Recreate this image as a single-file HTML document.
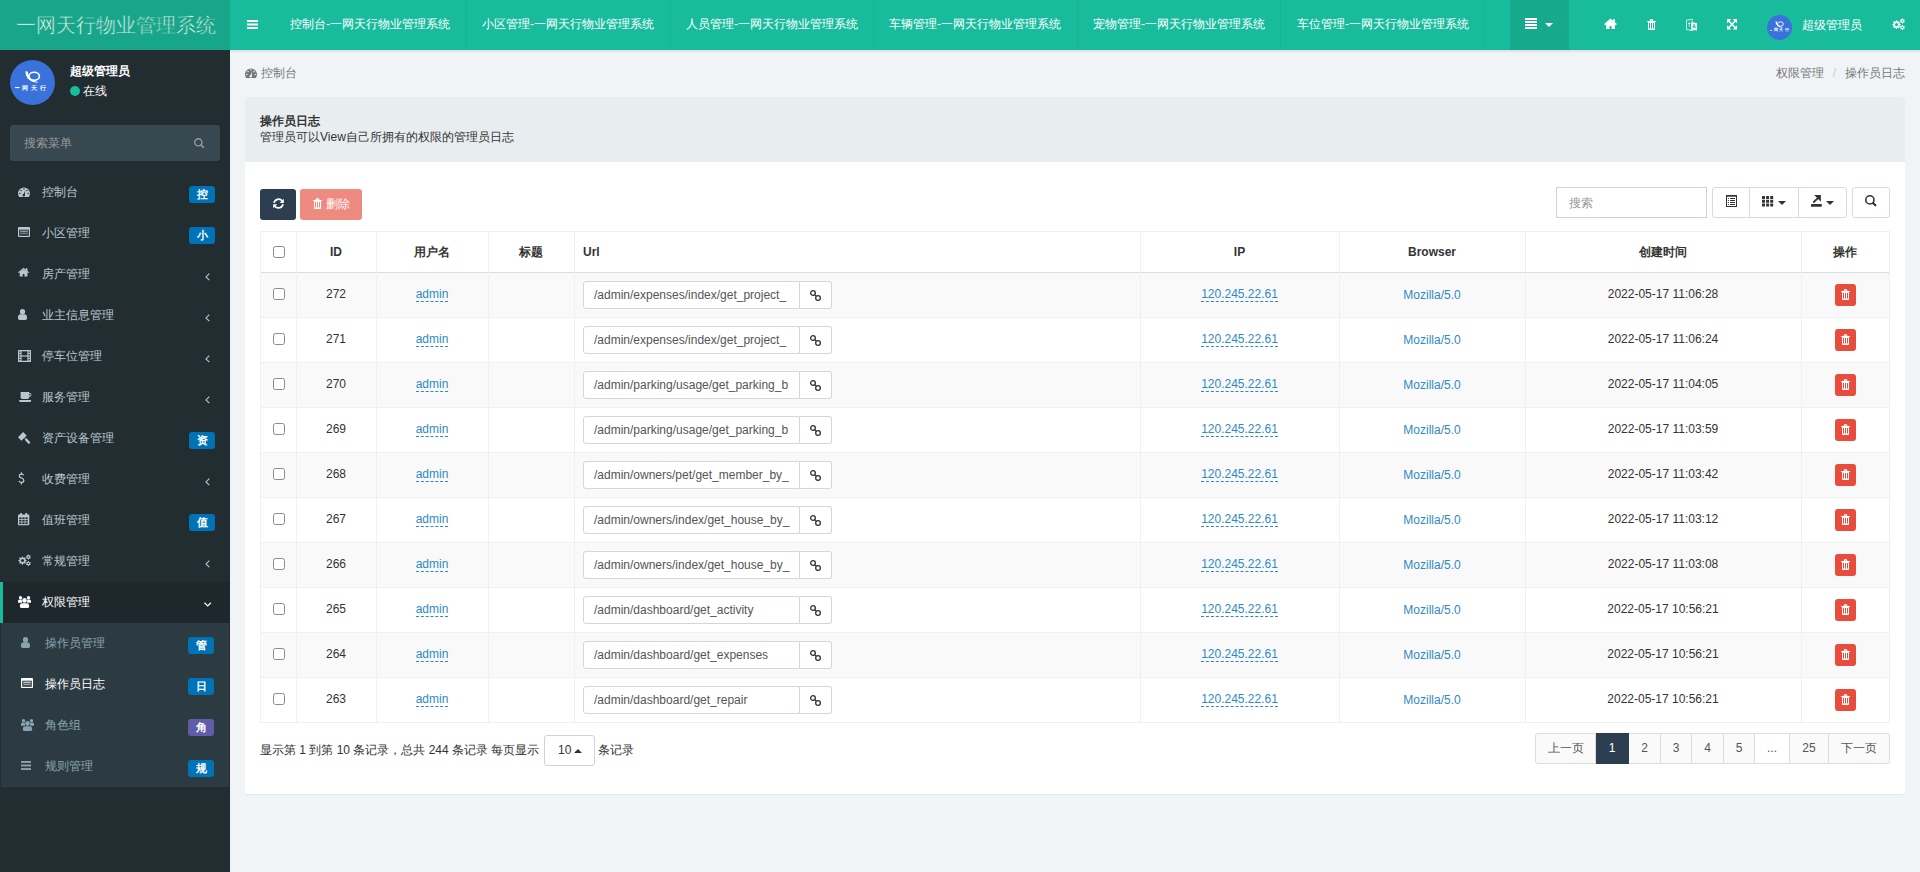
<!DOCTYPE html><html><head><meta charset="utf-8"><title>操作员日志</title><style>
*{box-sizing:border-box;margin:0;padding:0}
html,body{width:1920px;height:872px;overflow:hidden}
body{font-family:"Liberation Sans",sans-serif;font-size:12px;color:#333;background:#f1f4f6;position:relative}
svg{display:block;overflow:visible}
.abs{position:absolute;white-space:nowrap}
.hdr{position:absolute;left:0;top:0;width:1920px;height:50px;background:#18bc9c}
.logo{position:absolute;left:0;top:0;width:230px;height:50px;background:#17a689;color:#fff;font-size:20px;font-weight:300;-webkit-text-stroke:0.6px #17a689;line-height:50px;padding-left:16px;white-space:nowrap}
.tab{position:absolute;top:0;height:50px;line-height:48px;color:#fff;font-size:12px;white-space:nowrap}
.sep{position:absolute;top:0;width:1px;height:49px;background:rgba(0,0,0,0.05)}
.side{position:absolute;left:0;top:50px;width:230px;height:822px;background:#222d32}
.mi{position:absolute;left:0;width:230px;height:41px;color:#b8c7ce;font-size:12px}
.mi .tx{position:absolute;left:41px;top:0;line-height:41px}
.bd{position:absolute;width:26px;height:17px;border-radius:3px;background:#0073b7;color:#fff;font-weight:bold;font-size:11px;line-height:17px;text-align:center}
.content{position:absolute;left:230px;top:50px;width:1690px;height:822px;background:#f1f4f6}
.shadow{position:absolute;left:230px;top:50px;width:1690px;height:3px;background:linear-gradient(rgba(0,0,0,0.10),rgba(0,0,0,0))}
.panel{position:absolute;left:245px;top:97px;width:1660px;height:697px;background:#fff;border-radius:3px;box-shadow:0 1px 1px rgba(0,0,0,0.05)}
.ph{position:absolute;left:245px;top:97px;width:1660px;height:65px;background:#e8edf0;border-radius:3px 3px 0 0}
.hline{position:absolute;height:1px;background:#f0f0f0}
.vline{position:absolute;width:1px;background:#f0f0f0}
.cell{position:absolute;text-align:center;white-space:nowrap}
.lnk{color:#2f8ac4;border-bottom:1px dashed #2f8ac4}
.lnk2{color:#2f8ac4}
.inp{position:absolute;height:28px;border:1px solid #d2d6de;border-radius:3px 0 0 3px;background:#fff;color:#555;font-size:12px;line-height:26px;padding-left:10px;white-space:nowrap;overflow:hidden}
.addon{position:absolute;height:28px;border:1px solid #d2d6de;border-left:0;border-radius:0 3px 3px 0;background:#fff}
.cb{position:absolute;width:12px;height:12px;border:1px solid #8a8a8a;border-radius:2.5px;background:#fff}
.dbtn{position:absolute;width:21px;height:22px;border-radius:3px;background:#e74c3c}
.pg{position:absolute;top:733px;height:31px;border:1px solid #ddd;border-left:0;background:#fafafa;color:#555;text-align:center;line-height:29px;font-size:12px}
</style></head><body>
<div class="hdr"></div>
<div class="logo">一网天行物业管理系统</div>
<svg style="position:absolute;left:247px;top:20px" width="11" height="9" viewBox="0 0 11 9" ><rect x="0" y="0.00" width="11" height="2" fill="#fff"/><rect x="0" y="3.50" width="11" height="2" fill="#fff"/><rect x="0" y="7.00" width="11" height="2" fill="#fff"/></svg>
<div class="tab" style="left:290px">控制台-一网天行物业管理系统</div>
<div class="tab" style="left:482px">小区管理-一网天行物业管理系统</div>
<div class="tab" style="left:686px">人员管理-一网天行物业管理系统</div>
<div class="tab" style="left:889px">车辆管理-一网天行物业管理系统</div>
<div class="tab" style="left:1093px">宠物管理-一网天行物业管理系统</div>
<div class="tab" style="left:1297px">车位管理-一网天行物业管理系统</div>
<div class="sep" style="left:466px"></div>
<div class="sep" style="left:670px"></div>
<div class="sep" style="left:873px"></div>
<div class="sep" style="left:1077px"></div>
<div class="sep" style="left:1280px"></div>
<div class="sep" style="left:1484px"></div>
<div class="abs" style="left:1510px;top:0;width:59px;height:50px;background:#16a98c"></div>
<svg style="position:absolute;left:1525px;top:18px" width="12" height="11" viewBox="0 0 12 11" ><rect x="0" y="0.00" width="12" height="2" fill="#fff"/><rect x="0" y="3.00" width="12" height="2" fill="#fff"/><rect x="0" y="6.00" width="12" height="2" fill="#fff"/><rect x="0" y="9.00" width="12" height="2" fill="#fff"/></svg>
<svg style="position:absolute;left:1545px;top:23px" width="8" height="4" viewBox="0 0 8 4" ><path d="M0 0H8L4.0 4Z" fill="#fff"/></svg>
<svg style="position:absolute;left:1604px;top:19px" width="14" height="12" viewBox="0 0 14 12" ><g transform="scale(1.0)"><path d="M0.6 5.6L6.5 0.6L12.4 5.6" fill="none" stroke="#fff" stroke-width="1.5"/><path d="M2 5L6.5 1.6L11 5V10H7.5V7H5.5V10H2Z" fill="#fff"/><rect x="9" y="0.3" width="2" height="3.6" fill="#fff"/></g></svg>
<svg style="position:absolute;left:1647px;top:19px" width="9" height="11" viewBox="0 0 9 11" ><path d="M2.5 2Q2.6 0 4.5 0Q6.4 0 6.5 2Z" fill="#fff"/><path d="M3.5 2Q3.6 1 4.5 1Q5.4 1 5.5 2Z" fill="#18bc9c" fill-opacity="0.5"/><path d="M-0.3 2H9.3L8.6 3H0.4Z" fill="#fff"/><path d="M1 3H8V10.2Q8 11 7.2 11H1.8Q1 11 1 10.2Z" fill="#fff"/><rect x="2" y="4" width="1" height="5.5" fill="#18bc9c"/><rect x="4" y="4" width="1" height="5.5" fill="#18bc9c"/><rect x="6" y="4" width="1" height="5.5" fill="#18bc9c"/></svg>
<svg style="position:absolute;left:1686px;top:19px" width="11" height="12" viewBox="0 0 11 12" ><path d="M0.5 1.2L6.2 0.2V11.5L0.5 10.4Z" fill="none" stroke="#fff" stroke-width="0.9" stroke-opacity="0.8"/><path d="M2 4.5H4.5M3.2 3.3V8" stroke="#fff" stroke-width="0.8" stroke-opacity="0.8"/><path d="M5.3 3.2L11 3.9V11.6L5.3 10.8Z" fill="#fff"/><path d="M7 9.2L8.2 5.3L9.5 9.2M7.5 8H9" fill="none" stroke="#18bc9c" stroke-width="0.9"/><path d="M3.5 11.5H7.5" stroke="#fff" stroke-width="0.8" stroke-opacity="0.6"/></svg>
<svg style="position:absolute;left:1727px;top:19px" width="10" height="11" viewBox="0 0 10 11" ><path d="M0 0H4.2L0 4.2Z" fill="#fff"/><path d="M10 0H5.8L10 4.2Z" fill="#fff"/><path d="M0 10.5H4.2L0 6.3Z" fill="#fff"/><path d="M10 10.5H5.8L10 6.3Z" fill="#fff"/><path d="M1.2 1.2L8.8 9.3M8.8 1.2L1.2 9.3" stroke="#fff" stroke-width="1.5"/></svg>
<svg style="position:absolute;left:1767px;top:15px" width="25" height="25" viewBox="0 0 25 25" ><circle cx="12.5" cy="12.5" r="12.5" fill="#3a72dc"/><g transform="scale(0.5555555555555556)"><ellipse cx="24.2" cy="16.2" rx="5.2" ry="4" fill="none" stroke="#fff" stroke-width="1.6"/><path d="M15.3 11.3Q15.8 19 22 21.6Q25.5 22.9 28.5 22.2Q23.5 21.2 20.3 18Q17.6 15.2 17.8 11.6Z" fill="#fff"/><rect x="5" y="27" width="4.5" height="1.1" fill="#fff"/><text x="12" y="29.5" font-size="6.4" font-weight="bold" font-family="Liberation Sans" fill="#fff" fill-opacity="0.95" letter-spacing="3">网天行</text></g></svg>
<div class="abs" style="left:1802px;top:0;line-height:50px;color:#fff;font-size:12px">超级管理员</div>
<svg style="position:absolute;left:1892px;top:18px" width="14" height="13" viewBox="0 0 14 13" ><path d="M4.08 2.32L4.92 2.32L5.42 3.56L6.00 3.79L7.23 3.28L7.82 3.87L7.31 5.10L7.54 5.68L8.78 6.18L8.78 7.02L7.54 7.52L7.31 8.10L7.82 9.33L7.23 9.92L6.00 9.41L5.42 9.64L4.92 10.88L4.08 10.88L3.58 9.64L3.00 9.41L1.77 9.92L1.18 9.33L1.69 8.10L1.46 7.52L0.22 7.02L0.22 6.18L1.46 5.68L1.69 5.10L1.18 3.87L1.77 3.28L3.00 3.79L3.58 3.56Z" fill="#fff"/><circle cx="4.5" cy="6.6" r="1.55" fill="#18bc9c"/><path d="M10.07 0.52L10.73 0.52L11.11 1.29L11.53 1.53L12.38 1.48L12.71 2.04L12.23 2.76L12.23 3.24L12.71 3.96L12.38 4.52L11.53 4.47L11.11 4.71L10.73 5.48L10.07 5.48L9.69 4.71L9.27 4.47L8.42 4.52L8.09 3.96L8.57 3.24L8.57 2.76L8.09 2.04L8.42 1.48L9.27 1.53L9.69 1.29Z" fill="#fff"/><circle cx="10.4" cy="3.0" r="0.75" fill="#18bc9c"/><path d="M10.07 7.12L10.73 7.12L11.11 7.89L11.53 8.13L12.38 8.08L12.71 8.64L12.23 9.36L12.23 9.84L12.71 10.56L12.38 11.12L11.53 11.07L11.11 11.31L10.73 12.08L10.07 12.08L9.69 11.31L9.27 11.07L8.42 11.12L8.09 10.56L8.57 9.84L8.57 9.36L8.09 8.64L8.42 8.08L9.27 8.13L9.69 7.89Z" fill="#fff"/><circle cx="10.4" cy="9.6" r="0.75" fill="#18bc9c"/></svg>
<div class="side"></div>
<svg style="position:absolute;left:10px;top:60px" width="45" height="45" viewBox="0 0 45 45" ><circle cx="22.5" cy="22.5" r="22.5" fill="#3a72dc"/><g transform="scale(1.0)"><ellipse cx="24.2" cy="16.2" rx="5.2" ry="4" fill="none" stroke="#fff" stroke-width="1.6"/><path d="M15.3 11.3Q15.8 19 22 21.6Q25.5 22.9 28.5 22.2Q23.5 21.2 20.3 18Q17.6 15.2 17.8 11.6Z" fill="#fff"/><rect x="5" y="27" width="4.5" height="1.1" fill="#fff"/><text x="12" y="29.5" font-size="6.4" font-weight="bold" font-family="Liberation Sans" fill="#fff" fill-opacity="0.95" letter-spacing="3">网天行</text></g></svg>
<div class="abs" style="left:70px;top:63px;color:#fff;font-weight:bold;font-size:12px;line-height:16px">超级管理员</div>
<div class="abs" style="left:70px;top:86px;width:10px;height:10px;border-radius:50%;background:#18bc9c"></div>
<div class="abs" style="left:83px;top:83px;color:#fff;font-size:12px;line-height:16px">在线</div>
<div class="abs" style="left:10px;top:125px;width:210px;height:36px;background:#374850;border-radius:3px"></div>
<div class="abs" style="left:24px;top:125px;line-height:37px;color:#999;font-size:12px">搜索菜单</div>
<svg style="position:absolute;left:194px;top:138px" width="13" height="13" viewBox="0 0 13 13" ><circle cx="4.30" cy="4.30" r="3.6" fill="none" stroke="#999" stroke-width="1.4"/><path d="M7.19 7.19L9.16 9.16" stroke="#999" stroke-width="1.8" stroke-linecap="round"/></svg>
<svg style="position:absolute;left:18px;top:187px" width="12" height="10" viewBox="0 0 12 10" ><path d="M1.13 10A6 6 0 1 1 10.87 10Z" fill="#b8c7ce"/><circle cx="6" cy="2.1" r="0.75" fill="#222d32"/><circle cx="3" cy="3.4" r="0.75" fill="#222d32"/><circle cx="9" cy="3.4" r="0.75" fill="#222d32"/><circle cx="1.9" cy="6.5" r="0.75" fill="#222d32"/><circle cx="10.1" cy="6.5" r="0.75" fill="#222d32"/><circle cx="5.8" cy="8.2" r="1.2" fill="#222d32"/><path d="M5 8.2L7.3 3.6L6.6 8.4Z" fill="#222d32"/></svg>
<div class="abs" style="left:42px;top:172px;line-height:41px;color:#b8c7ce;font-size:12px">控制台</div>
<div class="bd" style="left:189px;top:186px">控</div>
<svg style="position:absolute;left:18px;top:227px" width="12" height="10" viewBox="0 0 12 10" ><rect x="0" y="0" width="12" height="10" rx="0.8" fill="#b8c7ce"/><rect x="1.2" y="2.7" width="9.6" height="6.1" fill="#222d32"/><rect x="2.2" y="3.7" width="7.6" height="1" fill="#b8c7ce"/><rect x="2.2" y="5.6" width="7.6" height="1.6" fill="#b8c7ce" fill-opacity="0.55"/></svg>
<div class="abs" style="left:42px;top:213px;line-height:41px;color:#b8c7ce;font-size:12px">小区管理</div>
<div class="bd" style="left:189px;top:227px">小</div>
<svg style="position:absolute;left:18px;top:268px" width="12" height="10" viewBox="0 0 12 10" ><g transform="scale(0.86)"><path d="M0.6 5.6L6.5 0.6L12.4 5.6" fill="none" stroke="#b8c7ce" stroke-width="1.5"/><path d="M2 5L6.5 1.6L11 5V10H7.5V7H5.5V10H2Z" fill="#b8c7ce"/><rect x="9" y="0.3" width="2" height="3.6" fill="#b8c7ce"/></g></svg>
<div class="abs" style="left:42px;top:254px;line-height:41px;color:#b8c7ce;font-size:12px">房产管理</div>
<svg style="position:absolute;left:205px;top:273px" width="5" height="8" viewBox="0 0 5 8" ><path d="M4.3 0.6L1 3.9L4.3 7.2" fill="none" stroke="#b8c7ce" stroke-width="1.1"/></svg>
<svg style="position:absolute;left:18px;top:309px" width="9" height="11" viewBox="0 0 9 11" ><circle cx="4.5" cy="2.7" r="2.6" fill="#b8c7ce"/><path d="M0 9.3V8.3Q0 5.3 2.8 5.3H6.2Q9 5.3 9 8.3V9.3Q9 11 7.3 11H1.7Q0 11 0 9.3Z" fill="#b8c7ce"/></svg>
<div class="abs" style="left:42px;top:295px;line-height:41px;color:#b8c7ce;font-size:12px">业主信息管理</div>
<svg style="position:absolute;left:205px;top:314px" width="5" height="8" viewBox="0 0 5 8" ><path d="M4.3 0.6L1 3.9L4.3 7.2" fill="none" stroke="#b8c7ce" stroke-width="1.1"/></svg>
<svg style="position:absolute;left:18px;top:350px" width="13" height="12" viewBox="0 0 13 12" ><rect x="0" y="0" width="13" height="12" rx="0.6" fill="#b8c7ce"/><rect x="3.6" y="1.3" width="5.8" height="4.1" fill="#222d32"/><rect x="3.6" y="6.6" width="5.8" height="4.1" fill="#222d32"/><rect x="1.1" y="1.50" width="1.4" height="1.3" fill="#222d32"/><rect x="10.5" y="1.50" width="1.4" height="1.3" fill="#222d32"/><rect x="1.1" y="4.00" width="1.4" height="1.3" fill="#222d32"/><rect x="10.5" y="4.00" width="1.4" height="1.3" fill="#222d32"/><rect x="1.1" y="6.50" width="1.4" height="1.3" fill="#222d32"/><rect x="10.5" y="6.50" width="1.4" height="1.3" fill="#222d32"/><rect x="1.1" y="9.00" width="1.4" height="1.3" fill="#222d32"/><rect x="10.5" y="9.00" width="1.4" height="1.3" fill="#222d32"/></svg>
<div class="abs" style="left:42px;top:336px;line-height:41px;color:#b8c7ce;font-size:12px">停车位管理</div>
<svg style="position:absolute;left:205px;top:355px" width="5" height="8" viewBox="0 0 5 8" ><path d="M4.3 0.6L1 3.9L4.3 7.2" fill="none" stroke="#b8c7ce" stroke-width="1.1"/></svg>
<svg style="position:absolute;left:19px;top:392px" width="13" height="10" viewBox="0 0 13 10" ><path d="M1.6 0H10.2V5.3Q10.2 7 8.5 7H3.3Q1.6 7 1.6 5.3Z" fill="#b8c7ce"/><circle cx="10.5" cy="2.8" r="1.9" fill="#b8c7ce"/><circle cx="10.7" cy="2.8" r="0.8" fill="#222d32"/><path d="M0 8H12.3L11.6 10H0.7Z" fill="#b8c7ce"/></svg>
<div class="abs" style="left:42px;top:377px;line-height:41px;color:#b8c7ce;font-size:12px">服务管理</div>
<svg style="position:absolute;left:205px;top:396px" width="5" height="8" viewBox="0 0 5 8" ><path d="M4.3 0.6L1 3.9L4.3 7.2" fill="none" stroke="#b8c7ce" stroke-width="1.1"/></svg>
<svg style="position:absolute;left:18px;top:432px" width="12" height="12" viewBox="0 0 12 12" ><path d="M0 5.2L5.1 0L8.7 3.5L3.4 8.8Z" fill="#b8c7ce"/><path d="M6.2 5.6L7.8 7.2" stroke="#b8c7ce" stroke-width="1"/><path d="M8.2 7.6L11 10.6" stroke="#b8c7ce" stroke-width="2.3" stroke-linecap="round"/></svg>
<div class="abs" style="left:42px;top:418px;line-height:41px;color:#b8c7ce;font-size:12px">资产设备管理</div>
<div class="bd" style="left:189px;top:432px">资</div>
<svg style="position:absolute;left:18px;top:472px" width="7" height="13" viewBox="0 0 7 13" ><path d="M5.6 3.2Q5 2.1 3.5 2.1Q1.3 2.1 1.3 3.9Q1.3 5.4 3.4 5.9Q5.8 6.5 5.8 8.4Q5.8 10.4 3.4 10.4Q1.6 10.4 0.9 9" fill="none" stroke="#b8c7ce" stroke-width="1.3"/><path d="M3.4 0.3V2.1M3.4 10.4V12.6" stroke="#b8c7ce" stroke-width="1.2"/></svg>
<div class="abs" style="left:42px;top:459px;line-height:41px;color:#b8c7ce;font-size:12px">收费管理</div>
<svg style="position:absolute;left:205px;top:478px" width="5" height="8" viewBox="0 0 5 8" ><path d="M4.3 0.6L1 3.9L4.3 7.2" fill="none" stroke="#b8c7ce" stroke-width="1.1"/></svg>
<svg style="position:absolute;left:18px;top:513px" width="12" height="13" viewBox="0 0 12 13" ><rect x="0" y="1.5" width="11.3" height="10.7" rx="0.6" fill="#b8c7ce"/><rect x="1.20" y="4.40" width="2.3" height="1.7" fill="#222d32"/><rect x="1.20" y="6.90" width="2.3" height="1.7" fill="#222d32"/><rect x="1.20" y="9.40" width="2.3" height="1.7" fill="#222d32"/><rect x="4.30" y="4.40" width="2.3" height="1.7" fill="#222d32"/><rect x="4.30" y="6.90" width="2.3" height="1.7" fill="#222d32"/><rect x="4.30" y="9.40" width="2.3" height="1.7" fill="#222d32"/><rect x="7.40" y="4.40" width="2.3" height="1.7" fill="#222d32"/><rect x="7.40" y="6.90" width="2.3" height="1.7" fill="#222d32"/><rect x="7.40" y="9.40" width="2.3" height="1.7" fill="#222d32"/><rect x="2.1" y="0" width="1.9" height="3" rx="0.6" fill="#b8c7ce"/><rect x="7.3" y="0" width="1.9" height="3" rx="0.6" fill="#b8c7ce"/></svg>
<div class="abs" style="left:42px;top:500px;line-height:41px;color:#b8c7ce;font-size:12px">值班管理</div>
<div class="bd" style="left:189px;top:514px">值</div>
<svg style="position:absolute;left:18px;top:554px" width="14" height="13" viewBox="0 0 14 13" ><path d="M4.09 2.42L4.91 2.42L5.40 3.63L5.97 3.86L7.16 3.35L7.75 3.94L7.24 5.13L7.47 5.70L8.68 6.19L8.68 7.01L7.47 7.50L7.24 8.07L7.75 9.26L7.16 9.85L5.97 9.34L5.40 9.57L4.91 10.78L4.09 10.78L3.60 9.57L3.03 9.34L1.84 9.85L1.25 9.26L1.76 8.07L1.53 7.50L0.32 7.01L0.32 6.19L1.53 5.70L1.76 5.13L1.25 3.94L1.84 3.35L3.03 3.86L3.60 3.63Z" fill="#b8c7ce"/><circle cx="4.5" cy="6.6" r="1.51" fill="#222d32"/><path d="M10.07 0.52L10.73 0.52L11.11 1.29L11.53 1.53L12.38 1.48L12.71 2.04L12.23 2.76L12.23 3.24L12.71 3.96L12.38 4.52L11.53 4.47L11.11 4.71L10.73 5.48L10.07 5.48L9.69 4.71L9.27 4.47L8.42 4.52L8.09 3.96L8.57 3.24L8.57 2.76L8.09 2.04L8.42 1.48L9.27 1.53L9.69 1.29Z" fill="#b8c7ce"/><circle cx="10.4" cy="3.0" r="0.75" fill="#222d32"/><path d="M10.07 7.12L10.73 7.12L11.11 7.89L11.53 8.13L12.38 8.08L12.71 8.64L12.23 9.36L12.23 9.84L12.71 10.56L12.38 11.12L11.53 11.07L11.11 11.31L10.73 12.08L10.07 12.08L9.69 11.31L9.27 11.07L8.42 11.12L8.09 10.56L8.57 9.84L8.57 9.36L8.09 8.64L8.42 8.08L9.27 8.13L9.69 7.89Z" fill="#b8c7ce"/><circle cx="10.4" cy="9.6" r="0.75" fill="#222d32"/></svg>
<div class="abs" style="left:42px;top:541px;line-height:41px;color:#b8c7ce;font-size:12px">常规管理</div>
<svg style="position:absolute;left:205px;top:560px" width="5" height="8" viewBox="0 0 5 8" ><path d="M4.3 0.6L1 3.9L4.3 7.2" fill="none" stroke="#b8c7ce" stroke-width="1.1"/></svg>
<div class="abs" style="left:0;top:582px;width:230px;height:41px;background:#1e282c"></div>
<div class="abs" style="left:0;top:582px;width:3px;height:41px;background:#18bc9c"></div>
<svg style="position:absolute;left:18px;top:596px" width="13" height="12" viewBox="0 0 13 12" ><circle cx="2.5" cy="1.7" r="1.65" fill="#fff"/><circle cx="10.5" cy="1.7" r="1.65" fill="#fff"/><path d="M0 6.7V5Q0 3.4 1.6 3.4H3.8L4 6.7Z" fill="#fff"/><path d="M13 6.7V5Q13 3.4 11.4 3.4H9.2L9 6.7Z" fill="#fff"/><circle cx="6.5" cy="4.4" r="2.3" fill="#fff"/><path d="M1.9 10.4V9.4Q1.9 7.2 4.1 7.2H8.9Q11.1 7.2 11.1 9.4V10.4Q11.1 12 9.5 12H3.5Q1.9 12 1.9 10.4Z" fill="#fff"/></svg>
<div class="abs" style="left:42px;top:582px;line-height:41px;color:#fff;font-size:12px">权限管理</div>
<svg style="position:absolute;left:204px;top:602px" width="8" height="5" viewBox="0 0 8 5" ><path d="M0.5 0.8L3.7 3.9L6.9 0.8" fill="none" stroke="#fff" stroke-width="1.2"/></svg>
<div class="abs" style="left:1px;top:623px;width:228px;height:164px;background:#2c3b41"></div>
<svg style="position:absolute;left:21px;top:637px" width="9" height="11" viewBox="0 0 9 11" ><circle cx="4.5" cy="2.7" r="2.6" fill="#8aa4af"/><path d="M0 9.3V8.3Q0 5.3 2.8 5.3H6.2Q9 5.3 9 8.3V9.3Q9 11 7.3 11H1.7Q0 11 0 9.3Z" fill="#8aa4af"/></svg>
<div class="abs" style="left:45px;top:623px;line-height:41px;color:#8aa4af;font-size:12px">操作员管理</div>
<div class="bd" style="left:188px;top:637px;background:#0073b7">管</div>
<svg style="position:absolute;left:21px;top:678px" width="12" height="10" viewBox="0 0 12 10" ><rect x="0" y="0" width="12" height="10" rx="0.8" fill="#fff"/><rect x="1.2" y="2.7" width="9.6" height="6.1" fill="#2c3b41"/><rect x="2.2" y="3.7" width="7.6" height="1" fill="#fff"/><rect x="2.2" y="5.6" width="7.6" height="1.6" fill="#fff" fill-opacity="0.55"/></svg>
<div class="abs" style="left:45px;top:664px;line-height:41px;color:#fff;font-size:12px">操作员日志</div>
<div class="bd" style="left:188px;top:678px;background:#0073b7">日</div>
<svg style="position:absolute;left:21px;top:719px" width="13" height="12" viewBox="0 0 13 12" ><circle cx="2.5" cy="1.7" r="1.65" fill="#8aa4af"/><circle cx="10.5" cy="1.7" r="1.65" fill="#8aa4af"/><path d="M0 6.7V5Q0 3.4 1.6 3.4H3.8L4 6.7Z" fill="#8aa4af"/><path d="M13 6.7V5Q13 3.4 11.4 3.4H9.2L9 6.7Z" fill="#8aa4af"/><circle cx="6.5" cy="4.4" r="2.3" fill="#8aa4af"/><path d="M1.9 10.4V9.4Q1.9 7.2 4.1 7.2H8.9Q11.1 7.2 11.1 9.4V10.4Q11.1 12 9.5 12H3.5Q1.9 12 1.9 10.4Z" fill="#8aa4af"/></svg>
<div class="abs" style="left:45px;top:705px;line-height:41px;color:#8aa4af;font-size:12px">角色组</div>
<div class="bd" style="left:188px;top:719px;background:#605ca8">角</div>
<svg style="position:absolute;left:21px;top:761px" width="10" height="9" viewBox="0 0 10 9" ><rect x="0" y="0.00" width="10" height="1.9" fill="#8aa4af"/><rect x="0" y="3.55" width="10" height="1.9" fill="#8aa4af"/><rect x="0" y="7.10" width="10" height="1.9" fill="#8aa4af"/></svg>
<div class="abs" style="left:45px;top:746px;line-height:41px;color:#8aa4af;font-size:12px">规则管理</div>
<div class="bd" style="left:188px;top:760px;background:#0073b7">规</div>
<div class="shadow"></div>
<svg style="position:absolute;left:245px;top:68px" width="12" height="10" viewBox="0 0 12 10" ><path d="M1.13 10A6 6 0 1 1 10.87 10Z" fill="#777"/><circle cx="6" cy="2.1" r="0.75" fill="#f1f4f6"/><circle cx="3" cy="3.4" r="0.75" fill="#f1f4f6"/><circle cx="9" cy="3.4" r="0.75" fill="#f1f4f6"/><circle cx="1.9" cy="6.5" r="0.75" fill="#f1f4f6"/><circle cx="10.1" cy="6.5" r="0.75" fill="#f1f4f6"/><circle cx="5.8" cy="8.2" r="1.2" fill="#f1f4f6"/><path d="M5 8.2L7.3 3.6L6.6 8.4Z" fill="#f1f4f6"/></svg>
<div class="abs" style="left:261px;top:65px;line-height:16px;color:#777;font-size:12px">控制台</div>
<div class="abs" style="right:15px;top:65px;line-height:16px;color:#777;font-size:12px">权限管理<span style="color:#ccc;padding:0 9px">/</span>操作员日志</div>
<div class="panel"></div>
<div class="ph"></div>
<div class="abs" style="left:260px;top:113px;line-height:16px;font-weight:bold;color:#333;font-size:12px">操作员日志</div>
<div class="abs" style="left:260px;top:129px;line-height:16px;color:#333;font-size:12px">管理员可以View自己所拥有的权限的管理员日志</div>
<div class="abs" style="left:260px;top:189px;width:36px;height:31px;background:#2c3e50;border-radius:3px"></div>
<svg style="position:absolute;left:273px;top:198px" width="11" height="11" viewBox="0 0 11 11" ><path d="M1 4.9A4.7 4.7 0 0 1 9.3 3" fill="none" stroke="#fff" stroke-width="1.7"/><path d="M10.8 0.8V4.9H6.7Z" fill="#fff"/><path d="M10 6.2A4.7 4.7 0 0 1 1.7 8.1" fill="none" stroke="#fff" stroke-width="1.7"/><path d="M0.2 10.3V6.2H4.3Z" fill="#fff"/></svg>
<div class="abs" style="left:300px;top:189px;width:62px;height:31px;background:#ef8a80;border-radius:3px"></div>
<svg style="position:absolute;left:313px;top:198px" width="9" height="11" viewBox="0 0 9 11" ><path d="M2.5 2Q2.6 0 4.5 0Q6.4 0 6.5 2Z" fill="#fff"/><path d="M3.5 2Q3.6 1 4.5 1Q5.4 1 5.5 2Z" fill="#ef8a80" fill-opacity="0.5"/><path d="M-0.3 2H9.3L8.6 3H0.4Z" fill="#fff"/><path d="M1 3H8V10.2Q8 11 7.2 11H1.8Q1 11 1 10.2Z" fill="#fff"/><rect x="2" y="4" width="1" height="5.5" fill="#ef8a80"/><rect x="4" y="4" width="1" height="5.5" fill="#ef8a80"/><rect x="6" y="4" width="1" height="5.5" fill="#ef8a80"/></svg>
<div class="abs" style="left:326px;top:189px;line-height:31px;color:#fff;font-size:12px">删除</div>
<div class="abs" style="left:1556px;top:187px;width:151px;height:31px;border:1px solid #ccd3da;border-radius:0;background:#fff"></div>
<div class="abs" style="left:1569px;top:188px;line-height:31px;color:#999;font-size:12px">搜索</div>
<div class="abs" style="left:1712px;top:187px;width:135px;height:31px;border:1px solid #d5dbe0;border-radius:3px;background:#fff"></div>
<div class="abs" style="left:1749px;top:187px;width:1px;height:31px;background:#d5dbe0"></div>
<div class="abs" style="left:1798px;top:187px;width:1px;height:31px;background:#d5dbe0"></div>
<svg style="position:absolute;left:1726px;top:195px" width="11" height="12" viewBox="0 0 11 12" ><rect x="0.5" y="0.5" width="10" height="11" fill="none" stroke="#333" stroke-width="1"/><rect x="0" y="0" width="11" height="1.7" fill="#333"/><rect x="1.9" y="3" width="1" height="1" fill="#333"/><rect x="4" y="3" width="5" height="1" fill="#333"/><rect x="1.9" y="5" width="1" height="1" fill="#333"/><rect x="4" y="5" width="5" height="1" fill="#333"/><rect x="1.9" y="7" width="1" height="1" fill="#333"/><rect x="4" y="7" width="5" height="1" fill="#333"/><rect x="1.9" y="9" width="1" height="1" fill="#333"/><rect x="4" y="9" width="5" height="1" fill="#333"/></svg>
<svg style="position:absolute;left:1762px;top:196px" width="12" height="11" viewBox="0 0 12 11" ><rect x="0.00" y="0.00" width="3" height="3" rx="0.3" fill="#333"/><rect x="0.00" y="3.70" width="3" height="3" rx="0.3" fill="#333"/><rect x="0.00" y="7.40" width="3" height="3" rx="0.3" fill="#333"/><rect x="4.10" y="0.00" width="3" height="3" rx="0.3" fill="#333"/><rect x="4.10" y="3.70" width="3" height="3" rx="0.3" fill="#333"/><rect x="4.10" y="7.40" width="3" height="3" rx="0.3" fill="#333"/><rect x="8.20" y="0.00" width="3" height="3" rx="0.3" fill="#333"/><rect x="8.20" y="3.70" width="3" height="3" rx="0.3" fill="#333"/><rect x="8.20" y="7.40" width="3" height="3" rx="0.3" fill="#333"/></svg>
<svg style="position:absolute;left:1778px;top:201px" width="8" height="4" viewBox="0 0 8 4" ><path d="M0 0H8L4.0 4Z" fill="#333"/></svg>
<svg style="position:absolute;left:1810px;top:195px" width="12" height="12" viewBox="0 0 12 12" ><rect x="1" y="9.1" width="10.8" height="2.7" rx="0.6" fill="#333"/><path d="M4.1 0.1H10.9V6.8Z" fill="#333"/><path d="M8.4 2.6L3.8 7" stroke="#333" stroke-width="1.8" stroke-linecap="round"/></svg>
<svg style="position:absolute;left:1826px;top:201px" width="8" height="4" viewBox="0 0 8 4" ><path d="M0 0H8L4.0 4Z" fill="#333"/></svg>
<div class="abs" style="left:1852px;top:187px;width:38px;height:31px;border:1px solid #d5dbe0;border-radius:3px;background:#fff"></div>
<svg style="position:absolute;left:1865px;top:195px" width="14" height="14" viewBox="0 0 14 14" ><circle cx="4.90" cy="4.90" r="4.1" fill="none" stroke="#333" stroke-width="1.6"/><path d="M8.19 8.19L10.32 10.32" stroke="#333" stroke-width="2.2" stroke-linecap="round"/></svg>
<div class="abs" style="left:261px;top:273px;width:1628px;height:45px;background:#f9f9f9"></div>
<div class="abs" style="left:261px;top:363px;width:1628px;height:45px;background:#f9f9f9"></div>
<div class="abs" style="left:261px;top:453px;width:1628px;height:45px;background:#f9f9f9"></div>
<div class="abs" style="left:261px;top:543px;width:1628px;height:45px;background:#f9f9f9"></div>
<div class="abs" style="left:261px;top:633px;width:1628px;height:45px;background:#f9f9f9"></div>
<div class="hline" style="left:260px;top:231px;width:1630px"></div>
<div class="hline" style="left:260px;top:272px;width:1630px;height:1px;background:#dddddd"></div>
<div class="hline" style="left:260px;top:317px;width:1630px"></div>
<div class="hline" style="left:260px;top:362px;width:1630px"></div>
<div class="hline" style="left:260px;top:407px;width:1630px"></div>
<div class="hline" style="left:260px;top:452px;width:1630px"></div>
<div class="hline" style="left:260px;top:497px;width:1630px"></div>
<div class="hline" style="left:260px;top:542px;width:1630px"></div>
<div class="hline" style="left:260px;top:587px;width:1630px"></div>
<div class="hline" style="left:260px;top:632px;width:1630px"></div>
<div class="hline" style="left:260px;top:677px;width:1630px"></div>
<div class="hline" style="left:260px;top:722px;width:1630px"></div>
<div class="vline" style="left:260px;top:231px;height:492px"></div>
<div class="vline" style="left:296px;top:231px;height:492px"></div>
<div class="vline" style="left:376px;top:231px;height:492px"></div>
<div class="vline" style="left:488px;top:231px;height:492px"></div>
<div class="vline" style="left:574px;top:231px;height:492px"></div>
<div class="vline" style="left:1140px;top:231px;height:492px"></div>
<div class="vline" style="left:1339px;top:231px;height:492px"></div>
<div class="vline" style="left:1525px;top:231px;height:492px"></div>
<div class="vline" style="left:1801px;top:231px;height:492px"></div>
<div class="vline" style="left:1889px;top:231px;height:492px"></div>
<div class="cb" style="left:273px;top:246px"></div>
<div class="cell" style="left:296px;top:232px;width:80px;line-height:41px;font-weight:bold;color:#333">ID</div>
<div class="cell" style="left:376px;top:232px;width:112px;line-height:41px;font-weight:bold;color:#333">用户名</div>
<div class="cell" style="left:488px;top:232px;width:86px;line-height:41px;font-weight:bold;color:#333">标题</div>
<div class="abs" style="left:583px;top:232px;line-height:41px;font-weight:bold;color:#333">Url</div>
<div class="cell" style="left:1140px;top:232px;width:199px;line-height:41px;font-weight:bold;color:#333">IP</div>
<div class="cell" style="left:1339px;top:232px;width:186px;line-height:41px;font-weight:bold;color:#333">Browser</div>
<div class="cell" style="left:1525px;top:232px;width:276px;line-height:41px;font-weight:bold;color:#333">创建时间</div>
<div class="cell" style="left:1801px;top:232px;width:88px;line-height:41px;font-weight:bold;color:#333">操作</div>
<div class="cb" style="left:273px;top:288px"></div>
<div class="cell" style="left:296px;top:273px;width:80px;line-height:42px">272</div>
<div class="cell" style="left:376px;top:273px;width:112px;line-height:42px"><span class="lnk">admin</span></div>
<div class="inp" style="left:583px;top:281px;width:217px">/admin/expenses/index/get_project_</div>
<div class="addon" style="left:800px;top:281px;width:32px"></div>
<svg style="position:absolute;left:810px;top:290px" width="11" height="11" viewBox="0 0 11 11" ><circle cx="3" cy="3" r="2.35" fill="none" stroke="#333" stroke-width="1.3"/><circle cx="8" cy="8" r="2.35" fill="none" stroke="#333" stroke-width="1.3"/><path d="M4.6 4.6L6.4 6.4" stroke="#333" stroke-width="1.1"/></svg>
<div class="cell" style="left:1140px;top:273px;width:199px;line-height:42px"><span class="lnk">120.245.22.61</span></div>
<div class="cell" style="left:1339px;top:273px;width:186px;line-height:44px"><span class="lnk2">Mozilla/5.0</span></div>
<div class="cell" style="left:1525px;top:273px;width:276px;line-height:42px">2022-05-17 11:06:28</div>
<div class="dbtn" style="left:1835px;top:284px"></div>
<svg style="position:absolute;left:1841px;top:289px" width="9" height="11" viewBox="0 0 9 11" ><path d="M2.5 2Q2.6 0 4.5 0Q6.4 0 6.5 2Z" fill="#fff"/><path d="M3.5 2Q3.6 1 4.5 1Q5.4 1 5.5 2Z" fill="#e74c3c" fill-opacity="0.5"/><path d="M-0.3 2H9.3L8.6 3H0.4Z" fill="#fff"/><path d="M1 3H8V10.2Q8 11 7.2 11H1.8Q1 11 1 10.2Z" fill="#fff"/><rect x="2" y="4" width="1" height="5.5" fill="#e74c3c"/><rect x="4" y="4" width="1" height="5.5" fill="#e74c3c"/><rect x="6" y="4" width="1" height="5.5" fill="#e74c3c"/></svg>
<div class="cb" style="left:273px;top:333px"></div>
<div class="cell" style="left:296px;top:318px;width:80px;line-height:42px">271</div>
<div class="cell" style="left:376px;top:318px;width:112px;line-height:42px"><span class="lnk">admin</span></div>
<div class="inp" style="left:583px;top:326px;width:217px">/admin/expenses/index/get_project_</div>
<div class="addon" style="left:800px;top:326px;width:32px"></div>
<svg style="position:absolute;left:810px;top:335px" width="11" height="11" viewBox="0 0 11 11" ><circle cx="3" cy="3" r="2.35" fill="none" stroke="#333" stroke-width="1.3"/><circle cx="8" cy="8" r="2.35" fill="none" stroke="#333" stroke-width="1.3"/><path d="M4.6 4.6L6.4 6.4" stroke="#333" stroke-width="1.1"/></svg>
<div class="cell" style="left:1140px;top:318px;width:199px;line-height:42px"><span class="lnk">120.245.22.61</span></div>
<div class="cell" style="left:1339px;top:318px;width:186px;line-height:44px"><span class="lnk2">Mozilla/5.0</span></div>
<div class="cell" style="left:1525px;top:318px;width:276px;line-height:42px">2022-05-17 11:06:24</div>
<div class="dbtn" style="left:1835px;top:329px"></div>
<svg style="position:absolute;left:1841px;top:334px" width="9" height="11" viewBox="0 0 9 11" ><path d="M2.5 2Q2.6 0 4.5 0Q6.4 0 6.5 2Z" fill="#fff"/><path d="M3.5 2Q3.6 1 4.5 1Q5.4 1 5.5 2Z" fill="#e74c3c" fill-opacity="0.5"/><path d="M-0.3 2H9.3L8.6 3H0.4Z" fill="#fff"/><path d="M1 3H8V10.2Q8 11 7.2 11H1.8Q1 11 1 10.2Z" fill="#fff"/><rect x="2" y="4" width="1" height="5.5" fill="#e74c3c"/><rect x="4" y="4" width="1" height="5.5" fill="#e74c3c"/><rect x="6" y="4" width="1" height="5.5" fill="#e74c3c"/></svg>
<div class="cb" style="left:273px;top:378px"></div>
<div class="cell" style="left:296px;top:363px;width:80px;line-height:42px">270</div>
<div class="cell" style="left:376px;top:363px;width:112px;line-height:42px"><span class="lnk">admin</span></div>
<div class="inp" style="left:583px;top:371px;width:217px">/admin/parking/usage/get_parking_b</div>
<div class="addon" style="left:800px;top:371px;width:32px"></div>
<svg style="position:absolute;left:810px;top:380px" width="11" height="11" viewBox="0 0 11 11" ><circle cx="3" cy="3" r="2.35" fill="none" stroke="#333" stroke-width="1.3"/><circle cx="8" cy="8" r="2.35" fill="none" stroke="#333" stroke-width="1.3"/><path d="M4.6 4.6L6.4 6.4" stroke="#333" stroke-width="1.1"/></svg>
<div class="cell" style="left:1140px;top:363px;width:199px;line-height:42px"><span class="lnk">120.245.22.61</span></div>
<div class="cell" style="left:1339px;top:363px;width:186px;line-height:44px"><span class="lnk2">Mozilla/5.0</span></div>
<div class="cell" style="left:1525px;top:363px;width:276px;line-height:42px">2022-05-17 11:04:05</div>
<div class="dbtn" style="left:1835px;top:374px"></div>
<svg style="position:absolute;left:1841px;top:379px" width="9" height="11" viewBox="0 0 9 11" ><path d="M2.5 2Q2.6 0 4.5 0Q6.4 0 6.5 2Z" fill="#fff"/><path d="M3.5 2Q3.6 1 4.5 1Q5.4 1 5.5 2Z" fill="#e74c3c" fill-opacity="0.5"/><path d="M-0.3 2H9.3L8.6 3H0.4Z" fill="#fff"/><path d="M1 3H8V10.2Q8 11 7.2 11H1.8Q1 11 1 10.2Z" fill="#fff"/><rect x="2" y="4" width="1" height="5.5" fill="#e74c3c"/><rect x="4" y="4" width="1" height="5.5" fill="#e74c3c"/><rect x="6" y="4" width="1" height="5.5" fill="#e74c3c"/></svg>
<div class="cb" style="left:273px;top:423px"></div>
<div class="cell" style="left:296px;top:408px;width:80px;line-height:42px">269</div>
<div class="cell" style="left:376px;top:408px;width:112px;line-height:42px"><span class="lnk">admin</span></div>
<div class="inp" style="left:583px;top:416px;width:217px">/admin/parking/usage/get_parking_b</div>
<div class="addon" style="left:800px;top:416px;width:32px"></div>
<svg style="position:absolute;left:810px;top:425px" width="11" height="11" viewBox="0 0 11 11" ><circle cx="3" cy="3" r="2.35" fill="none" stroke="#333" stroke-width="1.3"/><circle cx="8" cy="8" r="2.35" fill="none" stroke="#333" stroke-width="1.3"/><path d="M4.6 4.6L6.4 6.4" stroke="#333" stroke-width="1.1"/></svg>
<div class="cell" style="left:1140px;top:408px;width:199px;line-height:42px"><span class="lnk">120.245.22.61</span></div>
<div class="cell" style="left:1339px;top:408px;width:186px;line-height:44px"><span class="lnk2">Mozilla/5.0</span></div>
<div class="cell" style="left:1525px;top:408px;width:276px;line-height:42px">2022-05-17 11:03:59</div>
<div class="dbtn" style="left:1835px;top:419px"></div>
<svg style="position:absolute;left:1841px;top:424px" width="9" height="11" viewBox="0 0 9 11" ><path d="M2.5 2Q2.6 0 4.5 0Q6.4 0 6.5 2Z" fill="#fff"/><path d="M3.5 2Q3.6 1 4.5 1Q5.4 1 5.5 2Z" fill="#e74c3c" fill-opacity="0.5"/><path d="M-0.3 2H9.3L8.6 3H0.4Z" fill="#fff"/><path d="M1 3H8V10.2Q8 11 7.2 11H1.8Q1 11 1 10.2Z" fill="#fff"/><rect x="2" y="4" width="1" height="5.5" fill="#e74c3c"/><rect x="4" y="4" width="1" height="5.5" fill="#e74c3c"/><rect x="6" y="4" width="1" height="5.5" fill="#e74c3c"/></svg>
<div class="cb" style="left:273px;top:468px"></div>
<div class="cell" style="left:296px;top:453px;width:80px;line-height:42px">268</div>
<div class="cell" style="left:376px;top:453px;width:112px;line-height:42px"><span class="lnk">admin</span></div>
<div class="inp" style="left:583px;top:461px;width:217px">/admin/owners/pet/get_member_by_</div>
<div class="addon" style="left:800px;top:461px;width:32px"></div>
<svg style="position:absolute;left:810px;top:470px" width="11" height="11" viewBox="0 0 11 11" ><circle cx="3" cy="3" r="2.35" fill="none" stroke="#333" stroke-width="1.3"/><circle cx="8" cy="8" r="2.35" fill="none" stroke="#333" stroke-width="1.3"/><path d="M4.6 4.6L6.4 6.4" stroke="#333" stroke-width="1.1"/></svg>
<div class="cell" style="left:1140px;top:453px;width:199px;line-height:42px"><span class="lnk">120.245.22.61</span></div>
<div class="cell" style="left:1339px;top:453px;width:186px;line-height:44px"><span class="lnk2">Mozilla/5.0</span></div>
<div class="cell" style="left:1525px;top:453px;width:276px;line-height:42px">2022-05-17 11:03:42</div>
<div class="dbtn" style="left:1835px;top:464px"></div>
<svg style="position:absolute;left:1841px;top:469px" width="9" height="11" viewBox="0 0 9 11" ><path d="M2.5 2Q2.6 0 4.5 0Q6.4 0 6.5 2Z" fill="#fff"/><path d="M3.5 2Q3.6 1 4.5 1Q5.4 1 5.5 2Z" fill="#e74c3c" fill-opacity="0.5"/><path d="M-0.3 2H9.3L8.6 3H0.4Z" fill="#fff"/><path d="M1 3H8V10.2Q8 11 7.2 11H1.8Q1 11 1 10.2Z" fill="#fff"/><rect x="2" y="4" width="1" height="5.5" fill="#e74c3c"/><rect x="4" y="4" width="1" height="5.5" fill="#e74c3c"/><rect x="6" y="4" width="1" height="5.5" fill="#e74c3c"/></svg>
<div class="cb" style="left:273px;top:513px"></div>
<div class="cell" style="left:296px;top:498px;width:80px;line-height:42px">267</div>
<div class="cell" style="left:376px;top:498px;width:112px;line-height:42px"><span class="lnk">admin</span></div>
<div class="inp" style="left:583px;top:506px;width:217px">/admin/owners/index/get_house_by_</div>
<div class="addon" style="left:800px;top:506px;width:32px"></div>
<svg style="position:absolute;left:810px;top:515px" width="11" height="11" viewBox="0 0 11 11" ><circle cx="3" cy="3" r="2.35" fill="none" stroke="#333" stroke-width="1.3"/><circle cx="8" cy="8" r="2.35" fill="none" stroke="#333" stroke-width="1.3"/><path d="M4.6 4.6L6.4 6.4" stroke="#333" stroke-width="1.1"/></svg>
<div class="cell" style="left:1140px;top:498px;width:199px;line-height:42px"><span class="lnk">120.245.22.61</span></div>
<div class="cell" style="left:1339px;top:498px;width:186px;line-height:44px"><span class="lnk2">Mozilla/5.0</span></div>
<div class="cell" style="left:1525px;top:498px;width:276px;line-height:42px">2022-05-17 11:03:12</div>
<div class="dbtn" style="left:1835px;top:509px"></div>
<svg style="position:absolute;left:1841px;top:514px" width="9" height="11" viewBox="0 0 9 11" ><path d="M2.5 2Q2.6 0 4.5 0Q6.4 0 6.5 2Z" fill="#fff"/><path d="M3.5 2Q3.6 1 4.5 1Q5.4 1 5.5 2Z" fill="#e74c3c" fill-opacity="0.5"/><path d="M-0.3 2H9.3L8.6 3H0.4Z" fill="#fff"/><path d="M1 3H8V10.2Q8 11 7.2 11H1.8Q1 11 1 10.2Z" fill="#fff"/><rect x="2" y="4" width="1" height="5.5" fill="#e74c3c"/><rect x="4" y="4" width="1" height="5.5" fill="#e74c3c"/><rect x="6" y="4" width="1" height="5.5" fill="#e74c3c"/></svg>
<div class="cb" style="left:273px;top:558px"></div>
<div class="cell" style="left:296px;top:543px;width:80px;line-height:42px">266</div>
<div class="cell" style="left:376px;top:543px;width:112px;line-height:42px"><span class="lnk">admin</span></div>
<div class="inp" style="left:583px;top:551px;width:217px">/admin/owners/index/get_house_by_</div>
<div class="addon" style="left:800px;top:551px;width:32px"></div>
<svg style="position:absolute;left:810px;top:560px" width="11" height="11" viewBox="0 0 11 11" ><circle cx="3" cy="3" r="2.35" fill="none" stroke="#333" stroke-width="1.3"/><circle cx="8" cy="8" r="2.35" fill="none" stroke="#333" stroke-width="1.3"/><path d="M4.6 4.6L6.4 6.4" stroke="#333" stroke-width="1.1"/></svg>
<div class="cell" style="left:1140px;top:543px;width:199px;line-height:42px"><span class="lnk">120.245.22.61</span></div>
<div class="cell" style="left:1339px;top:543px;width:186px;line-height:44px"><span class="lnk2">Mozilla/5.0</span></div>
<div class="cell" style="left:1525px;top:543px;width:276px;line-height:42px">2022-05-17 11:03:08</div>
<div class="dbtn" style="left:1835px;top:554px"></div>
<svg style="position:absolute;left:1841px;top:559px" width="9" height="11" viewBox="0 0 9 11" ><path d="M2.5 2Q2.6 0 4.5 0Q6.4 0 6.5 2Z" fill="#fff"/><path d="M3.5 2Q3.6 1 4.5 1Q5.4 1 5.5 2Z" fill="#e74c3c" fill-opacity="0.5"/><path d="M-0.3 2H9.3L8.6 3H0.4Z" fill="#fff"/><path d="M1 3H8V10.2Q8 11 7.2 11H1.8Q1 11 1 10.2Z" fill="#fff"/><rect x="2" y="4" width="1" height="5.5" fill="#e74c3c"/><rect x="4" y="4" width="1" height="5.5" fill="#e74c3c"/><rect x="6" y="4" width="1" height="5.5" fill="#e74c3c"/></svg>
<div class="cb" style="left:273px;top:603px"></div>
<div class="cell" style="left:296px;top:588px;width:80px;line-height:42px">265</div>
<div class="cell" style="left:376px;top:588px;width:112px;line-height:42px"><span class="lnk">admin</span></div>
<div class="inp" style="left:583px;top:596px;width:217px">/admin/dashboard/get_activity</div>
<div class="addon" style="left:800px;top:596px;width:32px"></div>
<svg style="position:absolute;left:810px;top:605px" width="11" height="11" viewBox="0 0 11 11" ><circle cx="3" cy="3" r="2.35" fill="none" stroke="#333" stroke-width="1.3"/><circle cx="8" cy="8" r="2.35" fill="none" stroke="#333" stroke-width="1.3"/><path d="M4.6 4.6L6.4 6.4" stroke="#333" stroke-width="1.1"/></svg>
<div class="cell" style="left:1140px;top:588px;width:199px;line-height:42px"><span class="lnk">120.245.22.61</span></div>
<div class="cell" style="left:1339px;top:588px;width:186px;line-height:44px"><span class="lnk2">Mozilla/5.0</span></div>
<div class="cell" style="left:1525px;top:588px;width:276px;line-height:42px">2022-05-17 10:56:21</div>
<div class="dbtn" style="left:1835px;top:599px"></div>
<svg style="position:absolute;left:1841px;top:604px" width="9" height="11" viewBox="0 0 9 11" ><path d="M2.5 2Q2.6 0 4.5 0Q6.4 0 6.5 2Z" fill="#fff"/><path d="M3.5 2Q3.6 1 4.5 1Q5.4 1 5.5 2Z" fill="#e74c3c" fill-opacity="0.5"/><path d="M-0.3 2H9.3L8.6 3H0.4Z" fill="#fff"/><path d="M1 3H8V10.2Q8 11 7.2 11H1.8Q1 11 1 10.2Z" fill="#fff"/><rect x="2" y="4" width="1" height="5.5" fill="#e74c3c"/><rect x="4" y="4" width="1" height="5.5" fill="#e74c3c"/><rect x="6" y="4" width="1" height="5.5" fill="#e74c3c"/></svg>
<div class="cb" style="left:273px;top:648px"></div>
<div class="cell" style="left:296px;top:633px;width:80px;line-height:42px">264</div>
<div class="cell" style="left:376px;top:633px;width:112px;line-height:42px"><span class="lnk">admin</span></div>
<div class="inp" style="left:583px;top:641px;width:217px">/admin/dashboard/get_expenses</div>
<div class="addon" style="left:800px;top:641px;width:32px"></div>
<svg style="position:absolute;left:810px;top:650px" width="11" height="11" viewBox="0 0 11 11" ><circle cx="3" cy="3" r="2.35" fill="none" stroke="#333" stroke-width="1.3"/><circle cx="8" cy="8" r="2.35" fill="none" stroke="#333" stroke-width="1.3"/><path d="M4.6 4.6L6.4 6.4" stroke="#333" stroke-width="1.1"/></svg>
<div class="cell" style="left:1140px;top:633px;width:199px;line-height:42px"><span class="lnk">120.245.22.61</span></div>
<div class="cell" style="left:1339px;top:633px;width:186px;line-height:44px"><span class="lnk2">Mozilla/5.0</span></div>
<div class="cell" style="left:1525px;top:633px;width:276px;line-height:42px">2022-05-17 10:56:21</div>
<div class="dbtn" style="left:1835px;top:644px"></div>
<svg style="position:absolute;left:1841px;top:649px" width="9" height="11" viewBox="0 0 9 11" ><path d="M2.5 2Q2.6 0 4.5 0Q6.4 0 6.5 2Z" fill="#fff"/><path d="M3.5 2Q3.6 1 4.5 1Q5.4 1 5.5 2Z" fill="#e74c3c" fill-opacity="0.5"/><path d="M-0.3 2H9.3L8.6 3H0.4Z" fill="#fff"/><path d="M1 3H8V10.2Q8 11 7.2 11H1.8Q1 11 1 10.2Z" fill="#fff"/><rect x="2" y="4" width="1" height="5.5" fill="#e74c3c"/><rect x="4" y="4" width="1" height="5.5" fill="#e74c3c"/><rect x="6" y="4" width="1" height="5.5" fill="#e74c3c"/></svg>
<div class="cb" style="left:273px;top:693px"></div>
<div class="cell" style="left:296px;top:678px;width:80px;line-height:42px">263</div>
<div class="cell" style="left:376px;top:678px;width:112px;line-height:42px"><span class="lnk">admin</span></div>
<div class="inp" style="left:583px;top:686px;width:217px">/admin/dashboard/get_repair</div>
<div class="addon" style="left:800px;top:686px;width:32px"></div>
<svg style="position:absolute;left:810px;top:695px" width="11" height="11" viewBox="0 0 11 11" ><circle cx="3" cy="3" r="2.35" fill="none" stroke="#333" stroke-width="1.3"/><circle cx="8" cy="8" r="2.35" fill="none" stroke="#333" stroke-width="1.3"/><path d="M4.6 4.6L6.4 6.4" stroke="#333" stroke-width="1.1"/></svg>
<div class="cell" style="left:1140px;top:678px;width:199px;line-height:42px"><span class="lnk">120.245.22.61</span></div>
<div class="cell" style="left:1339px;top:678px;width:186px;line-height:44px"><span class="lnk2">Mozilla/5.0</span></div>
<div class="cell" style="left:1525px;top:678px;width:276px;line-height:42px">2022-05-17 10:56:21</div>
<div class="dbtn" style="left:1835px;top:689px"></div>
<svg style="position:absolute;left:1841px;top:694px" width="9" height="11" viewBox="0 0 9 11" ><path d="M2.5 2Q2.6 0 4.5 0Q6.4 0 6.5 2Z" fill="#fff"/><path d="M3.5 2Q3.6 1 4.5 1Q5.4 1 5.5 2Z" fill="#e74c3c" fill-opacity="0.5"/><path d="M-0.3 2H9.3L8.6 3H0.4Z" fill="#fff"/><path d="M1 3H8V10.2Q8 11 7.2 11H1.8Q1 11 1 10.2Z" fill="#fff"/><rect x="2" y="4" width="1" height="5.5" fill="#e74c3c"/><rect x="4" y="4" width="1" height="5.5" fill="#e74c3c"/><rect x="6" y="4" width="1" height="5.5" fill="#e74c3c"/></svg>
<div class="abs" style="left:260px;top:742px;line-height:16px;color:#333;font-size:12px">显示第 1 到第 10 条记录，总共 244 条记录 每页显示</div>
<div class="abs" style="left:544px;top:735px;width:51px;height:31px;border:1px solid #ccd3da;border-radius:3px;background:#fff"></div>
<div class="abs" style="left:558px;top:742px;line-height:16px;color:#333;font-size:12px">10</div>
<svg style="position:absolute;left:574px;top:749px" width="8" height="4" viewBox="0 0 8 4" ><path d="M0 4H8L4.0 0Z" fill="#333"/></svg>
<div class="abs" style="left:598px;top:742px;line-height:16px;color:#333;font-size:12px">条记录</div>
<div class="pg" style="left:1535px;width:61px;border-left:1px solid #ddd;border-radius:3px 0 0 3px;">上一页</div>
<div class="pg" style="left:1596px;width:33px;background:#2c3e50;border-color:#2c3e50;color:#fff;">1</div>
<div class="pg" style="left:1629px;width:32px;">2</div>
<div class="pg" style="left:1661px;width:31px;">3</div>
<div class="pg" style="left:1692px;width:32px;">4</div>
<div class="pg" style="left:1724px;width:31px;">5</div>
<div class="pg" style="left:1755px;width:35px;background:#fff;">...</div>
<div class="pg" style="left:1790px;width:39px;">25</div>
<div class="pg" style="left:1829px;width:61px;border-radius:0 3px 3px 0;">下一页</div>
</body></html>
